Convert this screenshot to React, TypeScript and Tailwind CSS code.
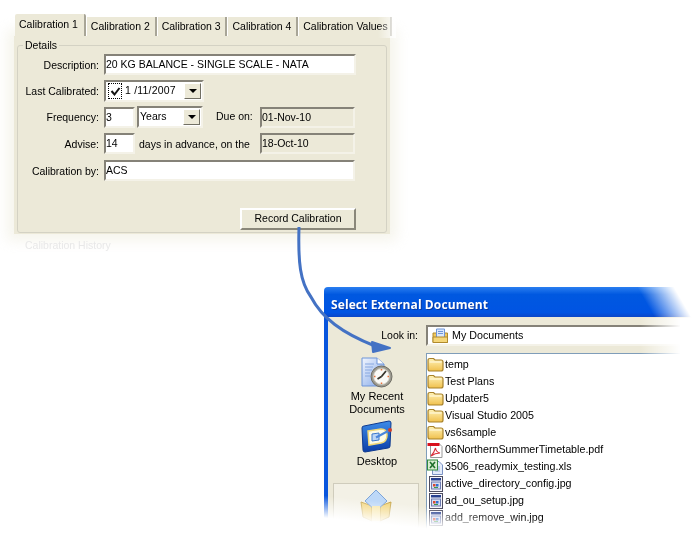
import { useId } from 'react';

const sunken = 'border-2 border-t-[#858278] border-l-[#858278] border-r-[#f4f2e8] border-b-[#f4f2e8]';

const tabs = ['Calibration 2', 'Calibration 3', 'Calibration 4', 'Calibration Values'];
const tabWidths = ['w-[71px]', 'w-[71px]', 'w-[71px]', 'w-[94px]'];

const files = [
    { name: 'temp', icon: 'folder' },
    { name: 'Test Plans', icon: 'folder' },
    { name: 'Updater5', icon: 'folder' },
    { name: 'Visual Studio 2005', icon: 'folder' },
    { name: 'vs6sample', icon: 'folder' },
    { name: '06NorthernSummerTimetable.pdf', icon: 'pdf' },
    { name: '3506_readymix_testing.xls', icon: 'xls' },
    { name: 'active_directory_config.jpg', icon: 'jpg' },
    { name: 'ad_ou_setup.jpg', icon: 'jpg' },
    { name: 'add_remove_win.jpg', icon: 'jpg' },
];

const FolderIcon = () => {
    const id = useId();
    return (
        <svg width="17" height="15" viewBox="0 0 17 15" className="shrink-0">
            <defs>
                <linearGradient id={id} x1="0" y1="0" x2="0" y2="1">
                    <stop offset="0" stopColor="#fff3b8" />
                    <stop offset="1" stopColor="#f0c04c" />
                </linearGradient>
            </defs>
            <path d="M1 3.5 Q1 1.5 3 1.5 H6.5 L8 3 H14 Q16 3 16 5 V12 Q16 14 14 14 H3 Q1 14 1 12 Z" fill={`url(#${id})`} stroke="#a8822a" strokeWidth="1.2" />
            <path d="M2.5 5 H14.5" stroke="#fffbe6" />
        </svg>
    );
};

const DocsIcon = () => (
    <svg width="17" height="16" viewBox="0 0 17 16" className="shrink-0">
        <path d="M1 5 H15.5 V14.5 H1 Z" fill="#f0c860" stroke="#b08a2c" />
        <path d="M4.5 1 H12.5 V11 H4.5 Z" fill="#dbe8fb" stroke="#6f95d8" />
        <path d="M6 3.5 H11 M6 5.5 H11" stroke="#6f95d8" />
        <path d="M1 9 H15.5 V14.5 H1 Z" fill="#f5d77a" stroke="#b08a2c" />
    </svg>
);

const PdfIcon = () => (
    <svg width="17" height="16" viewBox="0 0 17 16" className="shrink-0">
        <path d="M3.5 1.5 H12 L15 4.5 V15.5 H3.5 Z" fill="#fff" stroke="#9a9a9a" />
        <rect x="0.5" y="1" width="12" height="3" fill="#d8101c" />
        <path d="M4 14 Q7 11 8.5 6 Q9 10 13 11 Q8 11 4 14 Z" fill="none" stroke="#d8303c" strokeWidth="1.1" />
    </svg>
);

const XlsIcon = () => (
    <svg width="17" height="16" viewBox="0 0 17 16" className="shrink-0">
        <path d="M5.5 2.5 H12 L15.5 6 V15.5 H5.5 Z" fill="#e4ecfa" stroke="#7c93c4" />
        <path d="M8 8 H13 M8 10 H13 M8 12 H13" stroke="#9db2dc" />
        <rect x="0.5" y="1" width="10" height="10" fill="#d8ecd0" stroke="#2f8a3c" />
        <path d="M3 3 L8 9 M8 3 L3 9" stroke="#1d6e2a" strokeWidth="1.6" />
    </svg>
);

const JpgIcon = () => (
    <svg width="17" height="16" viewBox="0 0 17 16" className="shrink-0">
        <rect x="2.5" y="0.5" width="13" height="15" fill="#f4f4fa" stroke="#4c4c60" />
        <rect x="4" y="2" width="10" height="2.5" fill="#27408f" />
        <rect x="4.5" y="6" width="9" height="7" fill="#d5dcf2" stroke="#6d7bb0" />
        <rect x="6" y="8" width="2.5" height="2.5" fill="#d84a30" />
        <rect x="9" y="8" width="2.5" height="2.5" fill="#2f6fd0" />
        <rect x="7" y="11" width="4" height="1" fill="#3c9a48" />
    </svg>
);

const fileIcons = { folder: FolderIcon, pdf: PdfIcon, xls: XlsIcon, jpg: JpgIcon };

const RecentIcon = () => {
    const id = useId();
    return (
        <svg width="32" height="32" viewBox="0 0 32 32">
            <defs>
                <linearGradient id={id} x1="0" y1="0" x2="1" y2="1">
                    <stop offset="0" stopColor="#f2f6fe" />
                    <stop offset="1" stopColor="#80a6e8" />
                </linearGradient>
            </defs>
            <path d="M1 1 H16 L23 7 V29 H1 Z" fill={`url(#${id})`} stroke="#6f95d8" />
            <path d="M16 1 V7 H23" fill="#fff" stroke="#6f95d8" />
            <path d="M4 7 H13 M4 10 H12 M4 13 H11 M4 16 H9 M4 19 H9" stroke="#88a8e0" />
            <circle cx="20.5" cy="19.5" r="10.5" fill="#9c9a90" stroke="#6f6d64" />
            <circle cx="20.5" cy="19.5" r="8" fill="#fafaf6" stroke="#c8c6ba" />
            <path d="M20.5 19.5 L25 14 M20.5 19.5 L16.5 22" stroke="#37352c" strokeWidth="1.8" />
            <path d="M20.5 12 V13.5 M20.5 25.5 V27 M13 19.5 H14.5 M26.5 19.5 H28" stroke="#e8703c" strokeWidth="1.5" />
        </svg>
    );
};

const DesktopIcon = () => {
    const id = useId();
    return (
        <svg width="32" height="33" viewBox="0 0 32 33">
            <defs>
                <linearGradient id={id} x1="0" y1="0" x2="0" y2="1">
                    <stop offset="0" stopColor="#3c8ce8" />
                    <stop offset="1" stopColor="#0c3ea8" />
                </linearGradient>
            </defs>
            <path d="M1 8 Q1 6 3 6 L28 1 Q30 1 30 3 L29 26 Q29 28 27 28 L4 32 Q2 32 2 30 Z" fill={`url(#${id})`} stroke="#0e3a90" />
            <path d="M7 11 L20 9 Q26 9 26 15 Q26 22 20 23 L8 25 Z" fill="#fdfbe8" stroke="#f0d878" strokeWidth="1.5" />
            <path d="M11 14 L18 13 V20 L11 21 Z" fill="#bcd6f6" stroke="#3c78cc" />
            <path d="M15 17.5 L28 10.5" stroke="#4a86dc" strokeWidth="2" />
            <circle cx="29" cy="10" r="2" fill="#d0402c" />
        </svg>
    );
};

const MyDocsIcon = () => (
    <svg width="32" height="34" viewBox="0 0 32 34">
        <path d="M1 13 L12 17 V32 L3 28 Z" fill="#f2d680" stroke="#c8a850" />
        <path d="M31 13 L20 17 V32 L29 28 Z" fill="#f2d680" stroke="#c8a850" />
        <path d="M16 1 L27 12 L16 22 L5 12 Z" fill="#bdd8f8" stroke="#7ca4d8" />
        <path d="M12 17 H20 V32 H12 Z" fill="#f7e6a8" />
    </svg>
);

const DropArrow = () => (
    <div className="w-[17px] self-stretch bg-[#ece9d8] border border-t-white border-l-white border-r-[#716f64] border-b-[#716f64] flex items-center justify-center">
        <div className="w-0 h-0 border-x-[4px] border-x-transparent border-t-[4px] border-t-black" />
    </div>
);

const Label = ({ text }: { text: string }) => (
    <span className="w-[81px] text-right mr-[5px] pt-[2px] shrink-0">{text}</span>
);

const Field = ({ value, w, ro }: { value: string; w: string; ro?: boolean }) => (
    <div className={`${sunken} ${w} h-[21px] ${ro ? 'bg-[#ece9d8]' : 'bg-white'} leading-[16px] whitespace-nowrap`}>{value}</div>
);

const App = () => {
    return (
        <div className="relative w-[698px] h-[547px] overflow-hidden bg-white text-[10.5px] text-black font-['Liberation_Sans',sans-serif] [filter:blur(0.35px)]">
            {/* calibration panel */}
            <section className="ml-[14px] pt-[14px] w-[378px]">
                <div className="flex items-end h-[22px] pl-[1px]">
                    <div className="w-[71px] h-[22px] bg-[#ece9d8] rounded-t-[2px] px-[4px] pt-[3px] border-r-2 border-r-[#a8a597] whitespace-nowrap">Calibration 1</div>
                    {tabs.map((t, i) => (
                        <div key={t} className={`${tabWidths[i]} h-[19px] bg-[#ece9d8] pl-[4px] pt-[2px] border-r-2 border-r-[#a8a597] border-l border-l-white whitespace-nowrap`}>{t}</div>
                    ))}
                </div>
                <div className="w-[376px] h-[198px] bg-[#ece9d8] shadow-[0_0_12px_7px_rgba(236,233,216,0.45)] px-[3px] pt-[3px]">
                    <fieldset className="border border-[#d4d2c4] rounded-[3px] h-[194px] px-0">
                        <legend className="ml-[5px] px-[2px] leading-[13px]">Details</legend>
                        <div className="flex items-center mt-[2px]">
                            <Label text="Description:" />
                            <Field value="20 KG BALANCE - SINGLE SCALE - NATA" w="w-[252px]" />
                        </div>
                        <div className="flex items-center mt-[5px]">
                            <Label text="Last Calibrated:" />
                            <div className={`${sunken} bg-white w-[100px] h-[22px] flex items-center pr-[1px] py-[1px]`}>
                                <div className="w-[14px] h-[16px] ml-[2px] border border-dotted border-black flex items-center justify-center">
                                    <svg width="11" height="11" viewBox="0 0 11 11">
                                        <path d="M1.5 5 L4.5 8.5 L9.5 2" fill="none" stroke="#111" strokeWidth="2" />
                                    </svg>
                                </div>
                                <span className="ml-[3px] flex-1 tracking-[0.2px]">1 /11/2007</span>
                                <DropArrow />
                            </div>
                        </div>
                        <div className="flex items-center mt-[4px]">
                            <Label text="Frequency:" />
                            <Field value="3" w="w-[31px]" />
                            <div className={`${sunken} ml-[2px] bg-white w-[66px] h-[22px] flex items-center pr-[1px] py-[1px]`}>
                                <span className="ml-[1px] flex-1">Years</span>
                                <DropArrow />
                            </div>
                            <span className="ml-[13px] w-[44px] shrink-0">Due on:</span>
                            <Field value="01-Nov-10" w="w-[95px]" ro />
                        </div>
                        <div className="flex items-center mt-[5px]">
                            <Label text="Advise:" />
                            <Field value="14" w="w-[31px]" />
                            <span className="ml-[4px] pt-[2px] w-[121px] shrink-0 whitespace-nowrap">days in advance, on the</span>
                            <Field value="18-Oct-10" w="w-[95px]" ro />
                        </div>
                        <div className="flex items-center mt-[6px]">
                            <Label text="Calibration by:" />
                            <Field value="ACS" w="w-[251px]" />
                        </div>
                        <div className="flex justify-end mt-[27px] pr-[30px]">
                            <div className="w-[116px] h-[22px] flex items-center justify-center bg-[#ece9d8] border-2 border-t-white border-l-white border-r-[#8a877a] border-b-[#8a877a]">Record Calibration</div>
                        </div>
                    </fieldset>
                </div>
                <div className="mt-[5px] ml-[11px] leading-[13px] text-[#e8e8e8]">Calibration History</div>
            </section>

            {/* file dialog */}
            <section className="ml-[324px] mt-[35px] w-[374px]">
                <div className="h-[30px] bg-[linear-gradient(180deg,#2a7ef0_0%,#0058e0_25%,#0054e3_85%,#0a46c8_100%)] rounded-tl-[4px] flex items-center pl-[7px] pt-[5px] text-white font-bold text-[12px] tracking-[0.1px] font-['Open_Sans',sans-serif] [text-shadow:1px_1px_0_#0a3aa0]">
                    Select External Document
                </div>
                <div className="border-l-[4px] border-l-[#0855dd] bg-[#ece9d8] h-[214px] overflow-hidden">
                    <div className="flex items-center h-[36px] pt-[1px]">
                        <span className="w-[90px] text-right text-[10.5px] shrink-0">Look in:</span>
                        <div className={`${sunken} ml-[8px] w-[272px] h-[21px] bg-white flex items-center pl-[4px] gap-[3px] text-[10.7px]`}>
                            <DocsIcon />
                            <span>My Documents</span>
                        </div>
                    </div>
                    <div className="flex">
                        <div className="w-[98px] shrink-0 flex flex-col items-center pt-[4px] text-[11px] leading-[13px] text-center">
                            <RecentIcon />
                            <div className="mt-[1px]">My Recent<br />Documents</div>
                            <div className="mt-[4px]"><DesktopIcon /></div>
                            <div className="mt-[2px]">Desktop</div>
                            <div className="mt-[15px] w-[86px] h-[60px] self-start ml-[5px] border border-[#cfccbc] bg-[#f3f1e6] flex justify-center pt-[5px]">
                                <MyDocsIcon />
                            </div>
                        </div>
                        <div className="flex-1 h-[190px] bg-white border border-[#7f9db9] pt-[2px] text-[10.7px]">
                            {files.map((f) => {
                                const Icon = fileIcons[f.icon as keyof typeof fileIcons];
                                return (
                                    <div key={f.name} className="h-[17px] flex items-center gap-[1px] whitespace-nowrap">
                                        <Icon />
                                        <span>{f.name}</span>
                                    </div>
                                );
                            })}
                        </div>
                    </div>
                </div>
            </section>

            {/* connector arrow */}
            <svg className="absolute inset-0 pointer-events-none" width="698" height="547" viewBox="0 0 698 547">
                <path d="M299 227 C298 262 300 282 311 297 C322 318 342 333 375 346" fill="none" stroke="#4472c4" strokeWidth="3" />
                <path d="M390 348 L372 342 L373 352 Z" fill="#4472c4" stroke="#4472c4" strokeWidth="2" strokeLinejoin="round" />
            </svg>

            {/* torn edge fades */}
            <div className="absolute left-[378px] top-[12px] w-[18px] h-[26px] bg-[linear-gradient(90deg,rgba(255,255,255,0),rgba(255,255,255,0.85))]" />
            <div className="absolute left-[620px] top-[280px] w-[78px] h-[38px] bg-[linear-gradient(60deg,rgba(255,255,255,0)_35%,#fff_72%)]" />
            <div className="absolute left-[640px] top-[318px] w-[58px] h-[229px] bg-[linear-gradient(90deg,rgba(255,255,255,0)_0%,#fff_70%)]" />
            <div className="absolute left-[310px] top-[470px] w-[388px] h-[77px] bg-[linear-gradient(186deg,rgba(255,255,255,0)_55%,#fff_74%)]" />
        </div>
    );
};

export default App;
